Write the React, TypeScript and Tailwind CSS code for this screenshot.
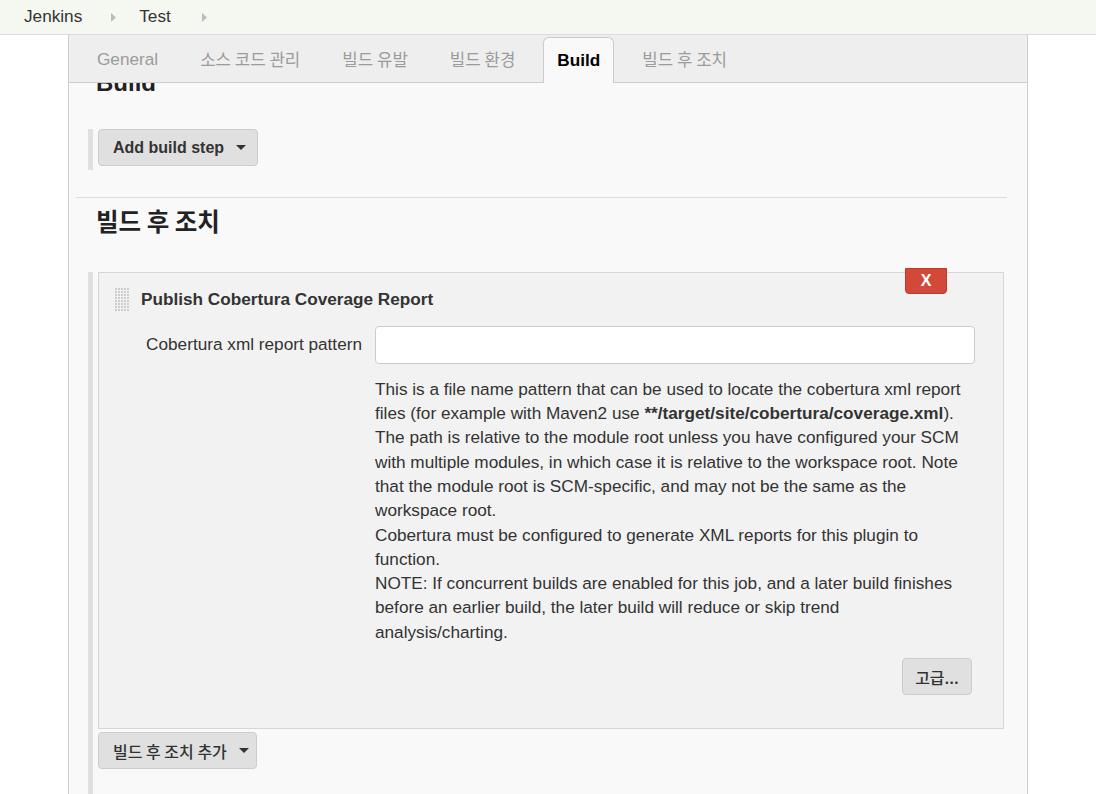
import React from "react";

const SANS = { fontFamily: '"Liberation Sans", Arial, "Noto Sans CJK KR", sans-serif' };
const KR = { fontFamily: '"Noto Sans CJK KR", sans-serif' };

function Caret() {
  return (
    <svg width="10" height="6" viewBox="0 0 10 6" className="ml-[12px]">
      <path d="M0 0 L10 0 L5 5 Z" fill="#333" />
    </svg>
  );
}

function Arrow() {
  return (
    <svg width="5" height="9" viewBox="0 0 5 9">
      <path d="M0 0 L5 4.5 L0 9 Z" fill="#bdbdbd" />
    </svg>
  );
}

function DragHandle() {
  const dots = [];
  for (let r = 0; r < 8; r++) {
    for (let c = 0; c < 5; c++) {
      dots.push(<rect key={`${r}-${c}`} x={c * 3} y={r * 3} width="2" height="2" fill="#cdcdcd" />);
    }
  }
  return (
    <svg width="15" height="24" viewBox="0 0 15 24">
      {dots}
    </svg>
  );
}

const helpLines: React.ReactNode[] = [
  "This is a file name pattern that can be used to locate the cobertura xml report",
  <>
    files (for example with Maven2 use <b>**/target/site/cobertura/coverage.xml</b>).
  </>,
  "The path is relative to the module root unless you have configured your SCM",
  "with multiple modules, in which case it is relative to the workspace root. Note",
  "that the module root is SCM-specific, and may not be the same as the",
  "workspace root.",
  "Cobertura must be configured to generate XML reports for this plugin to",
  "function.",
  "NOTE: If concurrent builds are enabled for this job, and a later build finishes",
  "before an earlier build, the later build will reduce or skip trend",
  "analysis/charting.",
];

export default function App() {
  const tabs = ["General", "소스 코드 관리", "빌드 유발", "빌드 환경", "Build", "빌드 후 조치"];
  const isKr = (t: string) => /[가-힣]/.test(t);
  return (
    <div className="w-[1096px] h-[794px] overflow-hidden bg-white text-[#333]" style={SANS}>
      {/* breadcrumb bar */}
      <div className="h-[35px] bg-[#f5f7f1] border-b border-[#dcdcdc] flex items-center pl-[24px] text-[17.2px] text-[#333]">
        <span>Jenkins</span>
        <span className="ml-[29px] mr-[23px] flex items-center"><Arrow /></span>
        <span>Test</span>
        <span className="ml-[31px] flex items-center"><Arrow /></span>
      </div>

      {/* main panel */}
      <div className="ml-[68px] w-[960px] h-[759px] bg-[#f9f9f9] border-l border-r border-[#cfcfcf] overflow-hidden">
        {/* tab bar */}
        <div className="relative z-10 h-[48px] bg-[#eeeeee] border-b border-[#cccccc] flex items-end pl-[14px] gap-[14px]">
          {tabs.map((t) =>
            t === "Build" ? (
              <div
                key={t}
                className="h-[46px] mb-[-1px] px-[13px] flex items-center bg-[#f9f9f9] border border-b-0 border-[#cccccc] rounded-t-[6px] text-[17.2px] font-bold text-black"
              >
                {t}
              </div>
            ) : (
              <div
                key={t}
                className={`h-[45px] px-[14px] flex items-center text-[#9b9b9b] ${isKr(t) ? "text-[16.8px]" : "text-[17.2px]"}`}
                style={isKr(t) ? KR : undefined}
              >
                {t}
              </div>
            )
          )}
        </div>

        {/* content */}
        <div className="relative">
          <h2 className="mt-[-16px] ml-[27px] text-[24px] leading-[32px] font-bold text-[#222]">Build</h2>

          <div className="mt-[30px] ml-[19px] flex">
            <div className="w-[5px] h-[41px] bg-[#e0e0e0]" />
            <div className="ml-[5px] h-[37px] w-[160px] bg-[#e0e0e0] border border-[#cccccc] rounded-[4px] flex items-center pl-[14px] text-[16px] font-bold text-[#333]">
              Add build step
              <Caret />
            </div>
          </div>

          <div className="mt-[27px] ml-[7px] w-[931px] h-px bg-[#dddddd]" />

          <h2 className="mt-[7px] ml-[27px] text-[24.5px] leading-[32px] font-bold text-[#222]" style={KR}>
            빌드 후 조치
          </h2>

          <div className="mt-[35px] ml-[19px] flex">
            <div className="w-[5px] h-[540px] bg-[#e0e0e0] shrink-0" />
            <div className="ml-[5px] flex flex-col">
              <div className="relative w-[906px] h-[457px] bg-[#f2f2f2] border border-[#d6d6d6]">
                <div className="absolute top-[-5px] right-[56px] w-[42px] h-[26px] bg-[#d24939] border border-[#c0392b] rounded-b-[4px] flex items-center justify-center text-white font-bold text-[16px]">
                  X
                </div>
                <div className="flex items-center pl-[16px] pt-[14px]">
                  <DragHandle />
                  <span className="ml-[11px] text-[17.2px] font-bold text-[#333]">Publish Cobertura Coverage Report</span>
                </div>
                <div className="flex mt-[13px]">
                  <div className="w-[263px] h-[38px] flex items-center justify-end text-[17.2px] text-[#333]">
                    Cobertura xml report pattern
                  </div>
                  <div className="ml-[13px] w-[600px] h-[38px] bg-white border border-[#cccccc] rounded-[4px]" />
                </div>
                <div className="ml-[276px] mt-[13px] w-[620px] text-[17.2px] leading-[24.3px] text-[#333]">
                  {helpLines.map((l, i) => (
                    <div key={i} className="whitespace-nowrap">
                      {l}
                    </div>
                  ))}
                </div>
                <div className="ml-[803px] mt-[14px] w-[70px] h-[37px] bg-[#e0e0e0] border border-[#cccccc] rounded-[4px] flex items-center justify-center text-[16px] text-[#333]">
                  <span style={KR} className="font-medium">고급...</span>
                </div>
              </div>
              <div className="mt-[3px] h-[37px] w-[159px] bg-[#e0e0e0] border border-[#cccccc] rounded-[4px] flex items-center pl-[14px] text-[16px] text-[#333]">
                <span style={KR} className="font-medium">빌드 후 조치 추가</span>
                <Caret />
              </div>
            </div>
          </div>
        </div>
      </div>
    </div>
  );
}
